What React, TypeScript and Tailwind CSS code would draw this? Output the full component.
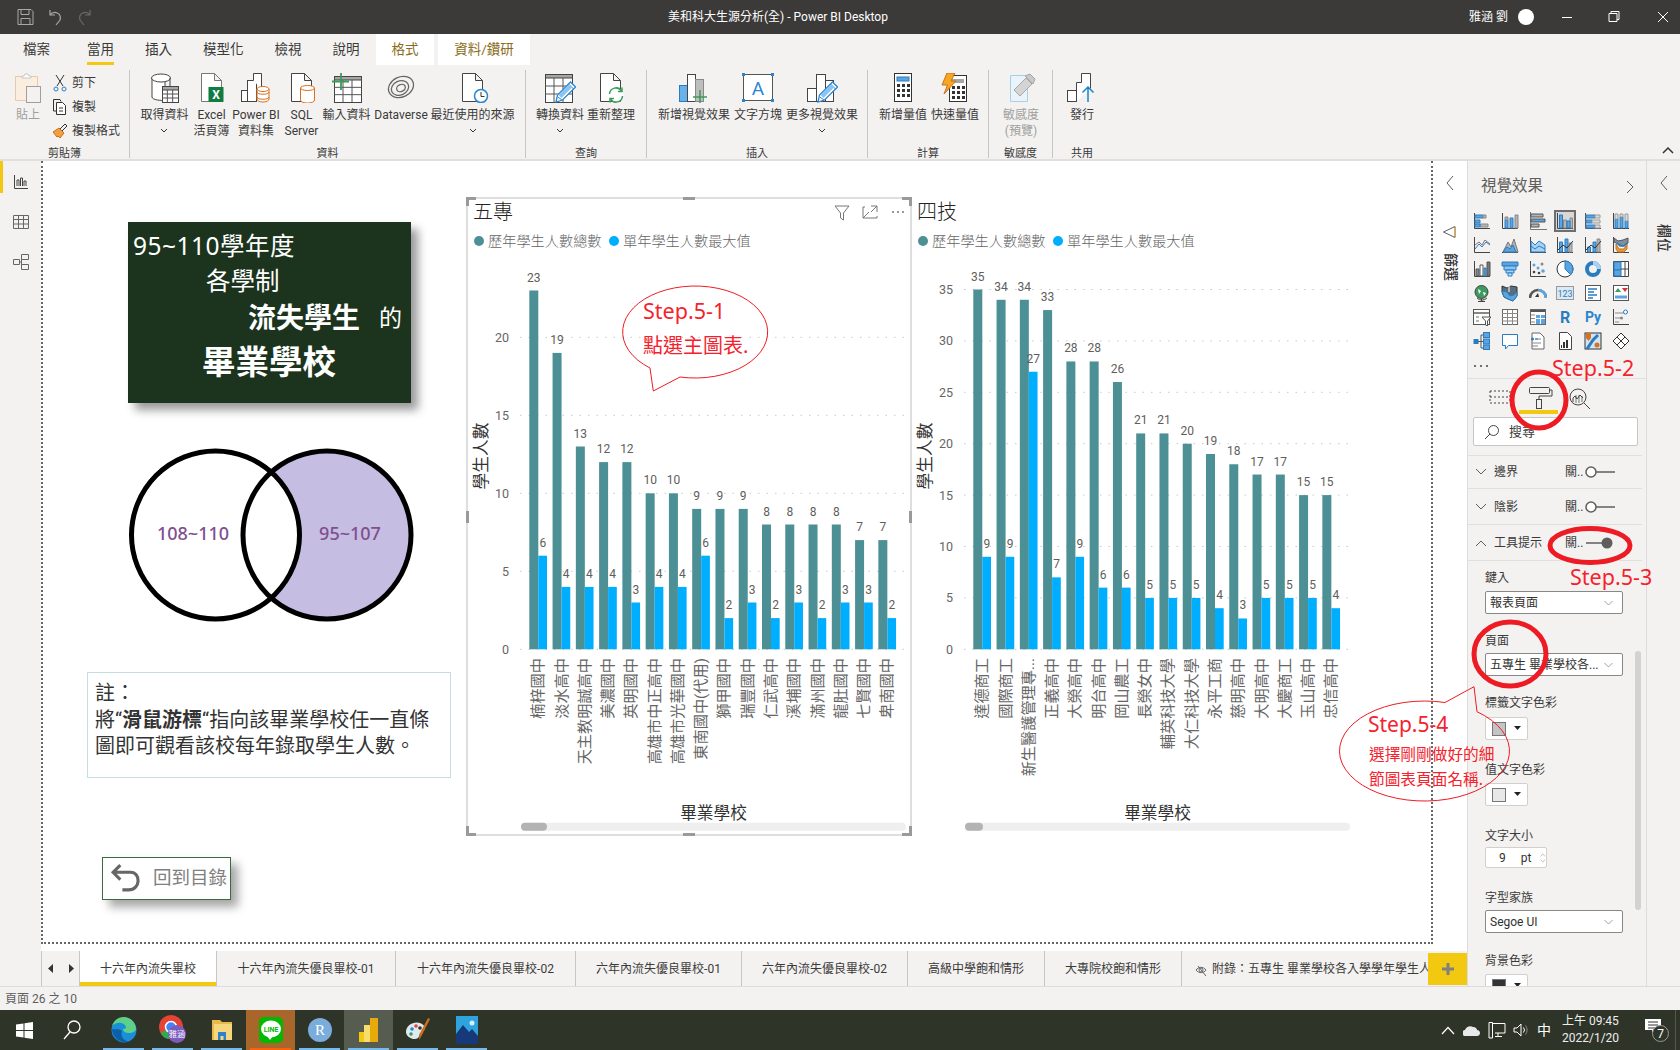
import { ReactNode } from "react";

const TEAL = "#4c9095";
const BLUE = "#00aeff";
const RED = "#ed1c24";
const DARK = "#444";
const PB = "#5ba4e0";
const PE = "#2a7cc0";
const GR = "#b5b5b5";

type Row = [string, number, number];

const wuzhuan: Row[] = [
  ["楠梓國中", 23, 6],
  ["淡水高中", 19, 4],
  ["天主教明誠高中", 13, 4],
  ["美濃國中", 12, 4],
  ["英明國中", 12, 3],
  ["高雄市中正高中", 10, 4],
  ["高雄市光華國中", 10, 4],
  ["東南國中(代用)", 9, 6],
  ["獅甲國中", 9, 2],
  ["瑞豐國中", 9, 3],
  ["仁武高中", 8, 2],
  ["溪埔國中", 8, 3],
  ["滿州國中", 8, 2],
  ["龍肚國中", 8, 3],
  ["七賢國中", 7, 3],
  ["卑南國中", 7, 2],
];

const siji: Row[] = [
  ["達德商工", 35, 9],
  ["國際商工", 34, 9],
  ["新生醫護管理專...", 34, 27],
  ["正義高中", 33, 7],
  ["大榮高中", 28, 9],
  ["明台高中", 28, 6],
  ["岡山農工", 26, 6],
  ["長榮女中", 21, 5],
  ["輔英科技大學", 21, 5],
  ["大仁科技大學", 20, 5],
  ["永平工商", 19, 4],
  ["慈明高中", 18, 3],
  ["大明高中", 17, 5],
  ["大慶商工", 17, 5],
  ["玉山高中", 15, 5],
  ["忠信高中", 15, 4],
];

function Handle({ x, y, w, h }: { x: number; y: number; w: number; h: number }) {
  return <rect x={x} y={y} width={w} height={h} fill="#9a9a9a" />;
}

function Chart({
  title,
  rows,
  unit,
  ticks,
  thumb,
  selected,
}: {
  title: string;
  rows: Row[];
  unit: number;
  ticks: number[];
  thumb: number;
  selected?: boolean;
}) {
  const base = 451.3;
  return (
    <svg width={444} height={637} viewBox="0 0 444 637" className="overflow-visible">
      {selected && (
        <g>
          <rect x={0} y={0} width={444} height={637} fill="none" stroke="#bdbdbd" strokeWidth={1} />
          <Handle x={-1} y={-1} w={10} h={3} />
          <Handle x={-1} y={-1} w={3} h={9} />
          <Handle x={435} y={-1} w={10} h={3} />
          <Handle x={442} y={-1} w={3} h={9} />
          <Handle x={-1} y={635} w={10} h={3} />
          <Handle x={-1} y={628} w={3} h={9} />
          <Handle x={435} y={635} w={10} h={3} />
          <Handle x={442} y={628} w={3} h={9} />
          <Handle x={216} y={-1} w={12} h={3} />
          <Handle x={216} y={635} w={12} h={3} />
          <Handle x={-1} y={313} w={3} h={12} />
          <Handle x={442} y={313} w={3} h={12} />
          <path d="M368 8h14l-5.500 7v7l-3-2v-5z" fill="none" stroke="#777" />
          <path d="M398 9h-2v11h14v-2M396 20l6-6M404 8h6v6M410 8l-6 6" fill="none" stroke="#777" />
          <circle cx={426} cy={14} r={1} fill="#777" />
          <circle cx={431} cy={14} r={1} fill="#777" />
          <circle cx={436} cy={14} r={1} fill="#777" />
        </g>
      )}
      <text x={6} y={14} fontSize={20} fontWeight={300} fill="#252423" dominantBaseline="central">
        {title}
      </text>
      <circle cx={12} cy={43} r={5} fill={TEAL} />
      <text x={21} y={43} fontSize={14.2} fontWeight={300} fill="#666" dominantBaseline="central">
        歷年學生人數總數
      </text>
      <circle cx={147} cy={43} r={5} fill={BLUE} />
      <text x={156} y={43} fontSize={14.2} fontWeight={300} fill="#666" dominantBaseline="central">
        單年學生人數最大值
      </text>
      {ticks.map((t) => (
        <g key={t}>
          <line
            x1={53}
            x2={439}
            y1={base - t * unit}
            y2={base - t * unit}
            stroke="#c8c8c8"
            strokeDasharray="1.500 7"
          />
          <text
            x={42}
            y={base - t * unit}
            fontSize={12.5}
            fill="#666"
            textAnchor="end"
            dominantBaseline="central"
          >
            {t}
          </text>
        </g>
      ))}
      {rows.map(([name, a, b], i) => {
        const x = 62.3 + i * 23.27;
        const cx = x + 9;
        return (
          <g key={name}>
            <rect x={x} y={base - a * unit} width={9} height={a * unit} fill={TEAL} />
            <rect x={x + 9} y={base - b * unit} width={8.700} height={b * unit} fill={BLUE} />
            <text
              x={x + 4.5}
              y={base - a * unit - 13}
              fontSize={12}
              fill="#605e5c"
              textAnchor="middle"
              dominantBaseline="central"
            >
              {a}
            </text>
            <text
              x={x + 13.5}
              y={base - b * unit - 13}
              fontSize={12}
              fill="#605e5c"
              textAnchor="middle"
              dominantBaseline="central"
            >
              {b}
            </text>
            <text
              x={cx}
              y={460}
              fontSize={15.2}
              fill="#666"
              textAnchor="end"
              dominantBaseline="central"
              transform={`rotate(-90 ${cx} 460)`}
            >
              {name}
            </text>
          </g>
        );
      })}
      <text
        x={14}
        y={258}
        fontSize={16.7}
        fill="#333"
        textAnchor="middle"
        dominantBaseline="central"
        transform="rotate(-90 14 258)"
      >
        學生人數
      </text>
      <text x={246.5} y={615} fontSize={16.7} fill="#333" textAnchor="middle" dominantBaseline="central">
        畢業學校
      </text>
      <rect x={54} y={624.7} width={385} height={8} rx={4} fill="#efefef" />
      <rect x={54} y={624.7} width={thumb} height={8} rx={4} fill="#b3b3b3" />
    </svg>
  );
}

function I32({ children, w = 32 }: { children: ReactNode; w?: number }) {
  return (
    <svg width={w} height={30} viewBox={`0 0 ${w} 30`} fill="none" stroke={DARK} strokeWidth={1}>
      {children}
    </svg>
  );
}

const Doc = (
  <path d="M5.500 .5h13l7 7v21h-20zM18.500 .5v7h7" fill="#fff" />
);

function Grid({ x, y, w, h }: { x: number; y: number; w: number; h: number }) {
  return (
    <g>
      <rect x={x + 0.5} y={y + 0.5} width={w} height={h} fill="#fff" />
      <rect x={x + 0.5} y={y + 0.5} width={w} height={3.500} fill="#a6a6a6" />
      <path
        d={`M${x + w / 3} ${y + 4}v${h - 4}M${x + (2 * w) / 3} ${y + 4}v${h - 4}M${x} ${y + 4 + (h - 4) / 3}h${w}M${x} ${y + 4 + (2 * (h - 4)) / 3}h${w}`}
        stroke="#555"
      />
    </g>
  );
}

function Cyl({ x, y, w, h }: { x: number; y: number; w: number; h: number }) {
  return (
    <g stroke="#d9701f" fill="#fff">
      <path d={`M${x} ${y + 3}v${h - 6}c0 4 ${w} 4 ${w} 0v-${h - 6}`} />
      <ellipse cx={x + w / 2} cy={y + 3} rx={w / 2} ry={2.500} />
    </g>
  );
}

const Pencil = (
  <g>
    <path d="M12 29l1.500-7 13-13 5 5-13 13z" fill="#fff" stroke="#2a86d0" strokeWidth={1.300} />
    <path d="M24.500 11l5 5" stroke="#2a86d0" />
    <path d="M14 24l4 3" stroke="#2a86d0" />
    <path d="M14.500 22l11-11 3 3-11 11z" fill="#8cc4f0" stroke="none" />
  </g>
);

const Bars = (
  <g fill="#fff">
    <rect x={1.500} y={15.500} width={9} height={13} />
    <rect x={10.500} y={1.500} width={9} height={27} />
    <rect x={19.500} y={7.500} width={8} height={21} />
  </g>
);

const Icons: Record<string, ReactNode> = {
  getData: (
    <I32>
      <path d="M3 5v19c0 3 10 4 13 3V5" fill="#fff" />
      <ellipse cx={12} cy={5} rx={9.500} ry={4} fill="#fff" />
      <path d="M21 5v8" />
      <Grid x={13} y={13} w={16} h={16} />
    </I32>
  ),
  excel: (
    <I32>
      <g stroke="#777">{Doc}</g>
      <rect x={12.500} y={14} width={15} height={15} fill="#107c41" stroke="none" />
      <text x={20} y={25.500} fontSize={12} fontWeight={700} fill="#fff" stroke="none" textAnchor="middle">
        X
      </text>
    </I32>
  ),
  dataset: (
    <I32>
      <g fill="#fff">
        <rect x={1.500} y={17.500} width={9} height={11} />
        <rect x={7.500} y={7.500} width={9} height={21} />
        <path d="M13.500 7.500v-7h8v16" />
      </g>
      <Cyl x={17} y={13} w={12} h={16} />
      <path d="M17 19c0 3 12 3 12 0M17 24c0 3 12 3 12 0" stroke="#d9701f" />
    </I32>
  ),
  sql: (
    <I32>
      {Doc}
      <Cyl x={14.500} y={12} w={14} h={18} />
    </I32>
  ),
  enter: (
    <I32>
      <Grid x={3} y={3} w={27} h={26} />
      <path d="M10 0v17M1 8.500h17" stroke="#3a9a5a" strokeWidth={1.800} />
    </I32>
  ),
  dataverse: (
    <I32>
      <g stroke="#666" strokeWidth={1.300}>
        <ellipse cx={16} cy={14} rx={13} ry={10} transform="rotate(-25 16 14)" />
        <ellipse cx={15} cy={15} rx={9} ry={7} transform="rotate(-25 15 15)" />
        <ellipse cx={16} cy={15} rx={4.500} ry={3.500} transform="rotate(-25 16 15)" />
      </g>
    </I32>
  ),
  recent: (
    <I32>
      {Doc}
      <circle cx={24} cy={23} r={6.500} fill="#fff" stroke="#2a86d0" strokeWidth={1.500} />
      <path d="M24 19v4.500h3.500" stroke="#333" />
    </I32>
  ),
  transform: (
    <I32>
      <Grid x={1} y={1} w={27} h={28} />
      {Pencil}
    </I32>
  ),
  refresh: (
    <I32>
      {Doc}
      <circle cx={21} cy={22} r={7.500} fill="#fff" stroke="none" />
      <path d="M14.500 21a6.500 6.500 0 0 1 12-3M27.500 23a6.500 6.500 0 0 1-12 3" stroke="#3a9a5a" strokeWidth={1.500} />
      <path d="M27 14.500v4h-4M15 29.500v-4h4" stroke="#3a9a5a" strokeWidth={1.500} />
    </I32>
  ),
  visual: (
    <I32>
      <rect x={1.500} y={12.500} width={8} height={16} fill="#69b1ea" stroke="#2a7cc0" />
      <rect x={9.500} y={1.500} width={8} height={27} fill="#fff" />
      <rect x={17.500} y={6.500} width={8} height={22} fill="#bdbdbd" stroke="#888" />
      <path d="M22 17v13M15 24h14" stroke="#3a9a5a" strokeWidth={1.500} />
    </I32>
  ),
  textbox: (
    <I32 w={34}>
      <rect x={2.500} y={1.500} width={29} height={26} fill="#fff" stroke="#555" />
      <g fill="#2a86d0" stroke="none">
        <rect x={1} y={0} width={3} height={3} />
        <rect x={30} y={0} width={3} height={3} />
        <rect x={1} y={26} width={3} height={3} />
        <rect x={30} y={26} width={3} height={3} />
      </g>
      <text x={17} y={22} fontSize={19} fill="#2a86d0" stroke="none" textAnchor="middle">
        A
      </text>
    </I32>
  ),
  more: (
    <I32>
      {Bars}
      {Pencil}
    </I32>
  ),
  measure: (
    <I32 w={20}>
      <rect x={1.500} y={.5} width={17} height={28} fill="#fff" stroke="#333" />
      <rect x={4} y={4} width={12} height={4} fill="#5ba4e0" stroke="#2a7cc0" />
      <g fill="#333" stroke="none">
        {[11, 16, 21].map((y) =>
          [4, 9, 14].map((x) => <rect key={`${x}-${y}`} x={x} y={y} width={3} height={3} />)
        )}
      </g>
    </I32>
  ),
  quick: (
    <I32>
      <rect x={10.500} y={2.500} width={17} height={26} fill="#fff" stroke="#333" />
      <rect x={13} y={6} width={12} height={4} fill="#a6a6a6" stroke="none" />
      <g fill="#333" stroke="none">
        {[13, 18, 23].map((y) =>
          [13, 18, 23].map((x) => <rect key={`${x}-${y}`} x={x} y={y} width={3} height={3} />)
        )}
      </g>
      <path d="M8 0h8l-4 8h5L5 21l3.500-9H3z" fill="#f6a623" stroke="#c9701a" />
    </I32>
  ),
  sensitivity: (
    <I32>
      <g stroke="#a6cfe8">
        <path d="M5.500 2.500h17v26h-17z" fill="#eaf3f9" />
      </g>
      <path d="M9 17l12-12 6 6-12 12z" fill="#d4d4d4" stroke="#a8a8a8" />
      <path d="M20 3l5-2 5 5-2 5z" fill="#c8c8c8" stroke="#a8a8a8" />
    </I32>
  ),
  publish: (
    <I32>
      <g fill="#fff">
        <rect x={1.500} y={17.500} width={9} height={11} />
        <path d="M10.500 28.500v-19h5v-9h9v15" />
      </g>
      <path d="M22 29V14M16.500 19.500L22 14l5.500 5.500" stroke="#1a86c8" strokeWidth={1.500} />
    </I32>
  ),
};

function RibbonBtn({
  w,
  icon,
  lines,
  chevron,
  muted,
}: {
  w: string;
  icon: string;
  lines: string[];
  chevron?: boolean;
  muted?: boolean;
}) {
  return (
    <div className={`flex shrink-0 flex-col items-center pt-[3px] ${w}`}>
      <div className="flex h-[30px] items-center justify-center">{Icons[icon]}</div>
      <div
        className={`mt-[4px] whitespace-nowrap text-center text-[12px] leading-[16px] ${muted ? "text-[#a19f9d]" : "text-[#3b3a39]"}`}
      >
        {lines.map((l) => (
          <div key={l}>{l}</div>
        ))}
        {chevron && (
          <svg width={8} height={16} viewBox="0 0 8 16" fill="none" stroke="#333" className="mx-auto">
            <path d="M1 6l3 3 3-3" />
          </svg>
        )}
      </div>
    </div>
  );
}

function Group({ w, pl, label, children }: { w: string; pl: string; label: string; children: ReactNode }) {
  return (
    <div className={`mt-[5px] h-[88px] shrink-0 border-r border-[#c8c6c4] ${w}`}>
      <div className={`flex h-[77px] ${pl}`}>{children}</div>
      <div className="text-center text-[11px] leading-[13px] text-[#3b3a39]">{label}</div>
    </div>
  );
}

function V({ children }: { children: ReactNode }) {
  return (
    <svg width={18} height={18} viewBox="0 0 18 18" fill="none" stroke={DARK} strokeWidth={1}>
      {children}
    </svg>
  );
}

const Ax = <path d="M1.500 1v15.500H17" />;

const visuals: ReactNode[] = [
  <V>
    {Ax}
    <path d="M2 3h8v3H2z" fill={PB} stroke={PE} />
    <path d="M10 3h3v3h-3zM7 12h8v3H7z" fill={GR} stroke="#888" />
    <path d="M2 8h5v3H2zM2 12h5v3H2z" fill={PB} stroke={PE} />
  </V>,
  <V>
    {Ax}
    <path d="M4 8h3v8H4zM9 6h3v10H9z" fill={PB} stroke={PE} />
    <path d="M14 3h3v13h-3zM4 5h3v3H4z" fill={GR} stroke="#888" />
  </V>,
  <V>
    <path d="M1.500 0v17.500H18" stroke="#777" />
    <path d="M2 2h12v3H2z" fill={GR} stroke="#555" />
    <path d="M2 7h14v3H2z" fill={PB} stroke="#555" />
    <path d="M2 12h8v3H2z" fill={GR} stroke="#555" />
  </V>,
  <V>
    {Ax}
    <path d="M3.500 3h3v13h-3z" fill={PB} stroke={PE} />
    <path d="M7.500 8h3v8h-3zM14 6h2.500v10H14z" fill={GR} stroke="#888" />
    <path d="M11 9h3v7h-3z" fill={PB} stroke={PE} />
  </V>,
  <V>
    <path d="M1.500 1v15.500H17" stroke="#555" />
    <path d="M2 3h9v3H2zM2 8h6v3H2zM2 13h9v3H2z" fill={PB} stroke={PE} />
    <path d="M11 3h5v3h-5zM8 8h8v3H8zM11 13h5v3h-5z" fill="#ddd" stroke="#999" />
  </V>,
  <V>
    {Ax}
    <path d="M3 7h3v9H3zM8 5h3v11H8zM13 9h3v7h-3z" fill={PB} stroke={PE} />
    <path d="M3 2h3v5H3zM8 2h3v3H8zM13 2h3v7h-3z" fill="#ddd" stroke="#999" />
  </V>,
  <V>
    {Ax}
    <path d="M2 13l4-5 3 3 4-5 4 3" stroke={PE} />
    <path d="M2 9l4-3 3 3 3-5 5 4" stroke="#777" />
  </V>,
  <V>
    <path d="M1 16.500h16" />
    <path d="M2 16l5-10 3 5 3-8 4 13z" fill={GR} stroke="#777" />
    <path d="M2 16l4-5 3 2 3-4 3 7z" fill={PB} stroke={PE} />
  </V>,
  <V>
    {Ax}
    <path d="M2 5l4 4 4-4 6 4v7H2z" fill="#a9d1f1" stroke={PE} />
    <path d="M2 10l4 3 4-3 6 3" stroke={PE} />
  </V>,
  <V>
    {Ax}
    <path d="M3.500 6h3v10h-3zM9 3h3v13H9z" fill={PB} stroke={PE} />
    <path d="M13 7h3v9h-3z" fill={GR} stroke="#888" />
    <path d="M2 14l5-5 4 3 6-7" stroke="#333" />
  </V>,
  <V>
    {Ax}
    <path d="M3.500 11h3v5h-3zM9 6h3v10H9z" fill={PB} stroke={PE} />
    <path d="M13 3h3v13h-3z" fill={GR} stroke="#888" />
    <path d="M2 14l5-5 4 3 6-7" stroke="#333" />
  </V>,
  <V>
    {Ax}
    <path d="M2 2l4 3 5-1 5-2v5l-5 3-5-2-4-2z" fill="#7e8f9e" stroke="#556" />
    <path d="M4 8l3 5h5l3-5v5l-3 3H6l-2-3z" fill="#e89a3c" stroke="#c9701a" />
    <path d="M5 7l3 3 4 0 3-3" stroke={PE} strokeWidth={1.500} />
  </V>,
  <V>
    {Ax}
    <path d="M3 9h3v7H3z" fill="#888" stroke="#555" />
    <path d="M7 5h3v11H7z" fill="#fff" stroke="#555" />
    <path d="M11 8h2v8h-2z" fill={PB} stroke={PE} />
    <path d="M14 2h3v14h-3z" fill="#777" stroke="#555" />
  </V>,
  <V>
    <path d="M1 2h16v4H1z" fill={PB} stroke={PE} />
    <path d="M3 6h12v4H3z" fill="#8cc4f0" stroke={PE} />
    <path d="M5 10h8v3H5z" fill="#a9d1f1" stroke={PE} />
    <path d="M7 13h4v3H7z" fill="#c6e0f5" stroke={PE} />
  </V>,
  <V>
    {Ax}
    <g stroke="none">
      <circle cx={5} cy={5} r={1.500} fill={PB} />
      <circle cx={9} cy={8} r={1.500} fill={PB} />
      <circle cx={13} cy={4} r={1.500} fill="#888" />
      <circle cx={14} cy={11} r={1.800} fill={PB} />
      <circle cx={5} cy={12} r={1.300} fill="#444" />
      <circle cx={10} cy={13} r={1.300} fill="#444" />
    </g>
  </V>,
  <V>
    <circle cx={9} cy={9} r={8} fill="#fff" stroke="#333" />
    <path d="M9 1a8 8 0 0 1 8 8 8 8 0 0 1-2.300 5.700L9 9z" fill={PB} stroke={PE} />
  </V>,
  <V>
    <circle cx={9} cy={9} r={6} stroke={PE} strokeWidth={4} />
    <path d="M9 3a6 6 0 0 1 6 6" stroke="#a9d1f1" strokeWidth={4} />
  </V>,
  <V>
    <path d="M1.500 1.500h15v15h-15z" fill="#fff" />
    <path d="M2 2h7v8H2z" fill={PB} stroke={PE} />
    <path d="M2 10h7v6H2z" fill={PB} stroke={PE} />
    <path d="M13 2v14M9 9h8" />
  </V>,
  <V>
    <circle cx={8.500} cy={8} r={6.500} fill="#3c9a5f" stroke="#444" />
    <path d="M5 5l3 2-2 3zM10 8l3 1-2 3z" fill="#fff" stroke="none" />
    <path d="M14 14a7 7 0 0 1-10 0M8.500 15v3M5 17.500h7" />
  </V>,
  <V>
    <path d="M1 2l5 2 4-2 6 1v9l-4 5-5-2-4-2-2-5z" fill="#5a6d7e" stroke="#333" />
    <path d="M1 7l5 1 3 4 4-1 3-3v4l-4 5-5-2-4-2z" fill={PB} stroke={PE} />
    <path d="M8 2v6" stroke="#fff" />
  </V>,
  <V>
    <path d="M1 14a8 8 0 0 1 16 0" stroke="#555" strokeWidth={2.500} />
    <path d="M9 6a8 8 0 0 1 8 8" stroke={PB} strokeWidth={2.500} />
    <path d="M6 13l3-4 1 4" fill="#333" stroke="none" />
  </V>,
  <V>
    <rect x={.5} y={2.500} width={17} height={13} fill="#dce8f3" stroke="#999" />
    <text x={9} y={13} fontSize={9} fill={PE} stroke="none" textAnchor="middle">
      123
    </text>
  </V>,
  <V>
    <rect x={1.500} y={1.500} width={15} height={15} fill="#fff" stroke="#555" />
    <path d="M4 5h9M4 8h6M4 11h9M4 14h5" stroke={PE} strokeWidth={1.400} />
  </V>,
  <V>
    <rect x={1.500} y={1.500} width={15} height={15} fill="#fff" stroke="#555" />
    <path d="M3 8l3-4 3 4z" fill="#3c9a5f" stroke="none" />
    <path d="M10 4h6l-3 4z" fill="#d13438" stroke="none" />
    <path d="M3 13h12" stroke="#5ba4e0" strokeWidth={3} />
  </V>,
  <V>
    <rect x={.5} y={1.500} width={16} height={15} fill="#fff" stroke="#555" />
    <path d="M1 5h15" stroke="#888" strokeWidth={2} />
    <path d="M3 8h3v2H3zM3 12h3v2H3z" fill={GR} stroke="none" />
    <path d="M9 9h9l-3.500 4v5l-2-1v-4z" fill="#fff" stroke="#555" />
  </V>,
  <V>
    <rect x={1.500} y={1.500} width={15} height={15} fill="#fff" stroke="#666" />
    <path d="M1 5.500h16M1 9.500h16M1 13h16M6.500 2v15M11.500 2v15" stroke="#888" />
  </V>,
  <V>
    <rect x={1.500} y={1.500} width={15} height={15} fill="#fff" stroke="#666" />
    <path d="M7 7h4v3H7zM12 7h4v3h-4zM12 11h4v5h-4zM7 11h4v5H7z" fill={PB} stroke="none" />
    <path d="M2 3h14" stroke="#555" strokeWidth={2} />
    <path d="M2 7h4M2 10.500h4M2 14h4" stroke="#888" />
  </V>,
  <V>
    <text x={9} y={15} fontSize={16} fontWeight={700} fill="#2a7cc0" stroke="none" textAnchor="middle">
      R
    </text>
  </V>,
  <V>
    <text x={9} y={14} fontSize={14} fontWeight={700} fill="#2a86d0" stroke="none" textAnchor="middle">
      Py
    </text>
  </V>,
  <V>
    {Ax}
    <path d="M3 5h9M3 10h6M3 14h4" stroke="#888" />
    <circle cx={13.500} cy={4} r={2} fill="#fff" stroke={PE} />
    <circle cx={9.500} cy={10} r={1.500} fill="#888" stroke="none" />
  </V>,
  <V>
    <rect x={.5} y={7} width={5} height={5} fill={PE} stroke="none" />
    <path d="M5 9.500h3M8 3v13M8 3h3M8 9.500h3M8 16h3" stroke="#555" />
    <rect x={10.500} y={.5} width={6} height={5} fill={PB} stroke={PE} />
    <rect x={10.500} y={7} width={6} height={5} fill={PB} stroke={PE} />
    <rect x={10.500} y={13} width={6} height={4.500} fill={PB} stroke={PE} />
  </V>,
  <V>
    <path d="M1.500 2.500h15v11h-9l-3 3.500v-3.500h-3z" fill="#fff" stroke={PE} />
  </V>,
  <V>
    <path d="M3 1h8l4 4v12H3z" fill="#fff" stroke="#666" />
    <circle cx={3.500} cy={7} r={1.500} fill={PE} stroke="none" />
    <path d="M6 7h6M3 11h9M3 14h6" stroke="#888" />
    <path d="M6 7h3" stroke={PE} />
  </V>,
  <V>
    <path d="M3.500 .5h8l4 4v13h-12z" fill="#fff" stroke="#444" />
    <path d="M7 10h2v6H7zM10 8h2v8h-2zM5 13h1v3H5z" fill="#333" stroke="none" />
  </V>,
  <V>
    <rect x={1} y={1} width={16} height={16} fill="#cfe5f7" stroke="#333" />
    <path d="M3 17l6-9 5-5" stroke={PE} strokeWidth={3} />
    <path d="M2 1h5v5l-2.500 3L2 6z" fill="#d9701f" stroke="none" />
    <circle cx={13} cy={13} r={2.500} fill="#d9701f" stroke="none" />
  </V>,
  <V>
    <path d="M9 1l8 8-8 8-8-8z" fill="#fff" stroke="#333" />
    <path d="M5 5l8 8M13 5l-8 8" stroke="#333" />
  </V>,
];

function Chevron({ up }: { up?: boolean }) {
  return (
    <svg width={12} height={8} viewBox="0 0 12 8" fill="none" stroke="#605e5c" className="shrink-0">
      <path d={up ? "M1 7l5-5 5 5" : "M1 1l5 5 5-5"} />
    </svg>
  );
}

function SectionRow({ label, on, h }: { label: string; on?: boolean; h: string }) {
  return (
    <div className={`flex items-center border-b border-[#e1dfdd] pl-[7px] ${h}`}>
      <Chevron up={on} />
      <span className="ml-[7px] w-[71px] text-[12px] text-[#3b3a39]">{label}</span>
      <span className="w-[16px] text-[12px] text-[#3b3a39]">關..</span>
      <svg width={30} height={12} viewBox="0 0 30 12" className="ml-[4px]">
        {on ? (
          <g>
            <path d="M1 6h20" stroke="#605e5c" strokeWidth={1.500} />
            <circle cx={22} cy={6} r={5.500} fill="#605e5c" />
          </g>
        ) : (
          <g>
            <path d="M11 6h19" stroke="#605e5c" strokeWidth={1.500} />
            <circle cx={6} cy={6} r={5} fill="#fff" stroke="#605e5c" strokeWidth={1.500} />
          </g>
        )}
      </svg>
    </div>
  );
}

function Select({ value, mt }: { value: string; mt: string }) {
  return (
    <div
      className={`flex h-[23px] w-[138px] items-center justify-between rounded-[2px] border border-[#8a8886] bg-white pl-[4px] pr-[9px] text-[12px] text-[#323130] ${mt}`}
    >
      <span className="whitespace-nowrap">{value}</span>
      <svg width={9} height={6} viewBox="0 0 9 6" fill="none" stroke="#a19f9d">
        <path d="M.5 1l4 4 4-4" />
      </svg>
    </div>
  );
}

function Swatch({ color, mt }: { color: string; mt: string }) {
  return (
    <div
      className={`flex h-[23px] w-[43px] shrink-0 items-center rounded-[2px] border border-[#d2d0ce] bg-white pl-[6px] ${mt}`}
    >
      <div className="h-[14px] w-[14px] border border-[#777]" style={{ background: color }} />
      <svg width={8} height={5} viewBox="0 0 8 5" className="ml-[8px]">
        <path d="M0 0h7L3.500 4z" fill="#222" />
      </svg>
    </div>
  );
}

function Label({ text, mt }: { text: string; mt: string }) {
  return <div className={`h-[16px] text-[12px] leading-[16px] text-[#3b3a39] ${mt}`}>{text}</div>;
}

function VisualsPanel() {
  return (
    <div className="relative w-[180px] shrink-0 overflow-hidden border-l border-r border-[#dcdcdc] bg-[#f3f2f1]">
      <div className="flex h-[48px] items-center justify-between pl-[13px] pr-[12px] pt-[4px]">
        <span className="text-[15.5px] text-[#605e5c]">視覺效果</span>
        <svg width={8} height={14} viewBox="0 0 8 14" fill="none" stroke="#605e5c">
          <path d="M1 1l6 6-6 6" />
        </svg>
      </div>
      <div className="grid w-[167px] grid-cols-6">
        {visuals.map((v, i) => (
          <div key={i} className="flex h-[24px] items-center justify-center">
            <div
              className={
                i === 3
                  ? "flex h-[22px] w-[22px] items-center justify-center border-2 border-[#6e6e6e] bg-[#d8d8d8]"
                  : "flex items-center justify-center"
              }
            >
              {v}
            </div>
          </div>
        ))}
      </div>
      <div className="flex h-[25px] items-center pl-[5px]">
        <svg width={16} height={4} viewBox="0 0 16 4" fill="#444">
          <circle cx={2} cy={2} r={1} />
          <circle cx={8} cy={2} r={1} />
          <circle cx={14} cy={2} r={1} />
        </svg>
      </div>
      <div className="relative h-[37px] border-t border-[#e1dfdd]">
        <svg width={178} height={36} viewBox="0 0 178 36" fill="none" stroke="#444">
          <path d="M22 12h20M22 18h20M22 24h20M22 12v12M42 12v12" strokeDasharray="2 2" />
          <rect x={61.500} y={8.500} width={20} height={6} rx={1} />
          <path d="M81 11h3v6H71v4" />
          <rect x={68.500} y={20.500} width={5} height={9} />
          <circle cx={110} cy={18} r={8} />
          <path d="M105 23v-4l2-2 2 3 3-4 3 3M116 24l6 6" />
          <path d="M108 16v8M111 16v8M114 17v6" strokeWidth={.7} />
        </svg>
        <div className="absolute bottom-[1px] left-[51px] h-[4px] w-[39px] bg-[#f2c811]" />
      </div>
      <div className="mx-[5px] mt-[2px] flex h-[29px] w-[165px] items-center rounded-[2px] border border-[#c8c6c4] bg-white pl-[10px]">
        <svg width={16} height={16} viewBox="0 0 16 16" fill="none" stroke="#444">
          <circle cx={9.500} cy={6.500} r={5} />
          <path d="M6 10l-5 5" />
        </svg>
        <span className="ml-[9px] text-[13px] text-[#3b3a39]">搜尋</span>
      </div>
      <div className="mt-[9px] w-[174px] border-t border-[#e1dfdd]">
        <SectionRow label="邊界" h="h-[33px]" />
        <SectionRow label="陰影" h="h-[36px]" />
        <SectionRow label="工具提示" on h="h-[36px]" />
      </div>
      <div className="flex flex-col pl-[17px] pt-[9px]">
        <Label text="鍵入" mt="" />
        <Select value="報表頁面" mt="mt-[5px]" />
        <Label text="頁面" mt="mt-[19px]" />
        <Select value="五專生 畢業學校各..." mt="mt-[4px]" />
        <Label text="標籤文字色彩" mt="mt-[19px]" />
        <Swatch color="#c4c4c4" mt="mt-[6px]" />
        <Label text="值文字色彩" mt="mt-[22px]" />
        <Swatch color="#e8e8e8" mt="mt-[5px]" />
        <Label text="文字大小" mt="mt-[22px]" />
        <div className="mt-[3px] flex h-[21px] w-[62px] items-center rounded-[2px] border border-[#d2d0ce] bg-white pl-[13px] text-[12px] text-[#323130]">
          <span>9</span>
          <span className="ml-[15px]">pt</span>
          <svg width={10} height={16} viewBox="0 0 10 16" fill="none" stroke="#888" className="ml-[9px]">
            <path d="M1 5l4-4 4 4M1 11l4 4 4-4" />
          </svg>
        </div>
        <Label text="字型家族" mt="mt-[22px]" />
        <Select value="Segoe UI" mt="mt-[4px]" />
        <Label text="背景色彩" mt="mt-[20px]" />
        <Swatch color="#333333" mt="mt-[5px]" />
      </div>
      <div className="absolute left-[167px] top-[490px] h-[259px] w-[6px] rounded-[3px] bg-[#d2d2d2]" />
    </div>
  );
}

function PageTab({ label, w, active }: { label: string; w: string; active?: boolean }) {
  return (
    <div
      className={`relative flex h-full shrink-0 items-center justify-center border-r border-[#c8c6c4] text-[12px] text-[#3b3a39] ${w} ${active ? "bg-white" : "bg-[#f3f2f1]"}`}
    >
      {label}
      {active && <div className="absolute bottom-0 left-0 h-[4px] w-full bg-[#f2c811]" />}
    </div>
  );
}

function TaskIcon({ children, bar, bg }: { children: ReactNode; bar: string; bg?: string }) {
  return (
    <div className={`relative flex h-full w-[49px] shrink-0 items-center justify-center ${bg ?? ""}`}>
      {children}
      <div className={`absolute bottom-0 left-[4px] right-[4px] h-[2px] ${bar}`} />
    </div>
  );
}

export default function App() {
  return (
    <div className="relative flex h-[1050px] w-[1680px] flex-col overflow-hidden bg-white font-['Roboto','Noto_Sans_CJK_TC',sans-serif]">
      {/* title bar */}
      <div className="flex h-[34px] shrink-0 items-center bg-[#3b3a39]">
        <div className="flex w-[668px] shrink-0 items-center">
          <svg width={90} height={20} viewBox="0 0 90 20" fill="none" className="ml-[17px]">
            <path d="M1 2.500h13l2 2v13H1z M4 2.500v5h8v-5M4 17.500v-6h9v6" stroke="#a8a8a8" />
            <path d="M33 3v5h5M33 8c4-5 12-2 10 5l-4 5" stroke="#a8a8a8" strokeWidth={1.200} />
            <path d="M73 3v5h-5M73 8c-4-5-12-2-10 5l4 5" stroke="#6a6a6a" strokeWidth={1.200} />
          </svg>
        </div>
        <span className="whitespace-nowrap text-[12px] text-white">美和科大生源分析(全) - Power BI Desktop</span>
        <span className="ml-auto whitespace-nowrap text-[12px] text-white">雅涵 劉</span>
        <div className="ml-[10px] h-[16px] w-[16px] shrink-0 rounded-full bg-white" />
        <svg width={134} height={14} viewBox="0 0 134 14" fill="none" stroke="#fff" className="ml-[12px] shrink-0">
          <path d="M16 7.500h10" />
          <path d="M63 3.500h8v8h-8zM65 3.500v-2h8v8h-2" />
          <path d="M112 2l10 10M122 2l-10 10" />
        </svg>
      </div>

      {/* ribbon tabs */}
      <div className="flex h-[31px] shrink-0 items-stretch bg-[#f3f2f1] text-[13.5px] text-[#3b3a39]">
        <div className="flex w-[376px] items-center pl-[23px]">
          <span>檔案</span>
          <span className="relative ml-[37px] flex h-full items-center">
            當用
            <span className="absolute bottom-0 left-0 h-[3px] w-full bg-[#f2c811]" />
          </span>
          <span className="ml-[31px]">插入</span>
          <span className="ml-[31px]">模型化</span>
          <span className="ml-[31px]">檢視</span>
          <span className="ml-[31px]">說明</span>
        </div>
        <div className="flex w-[58px] items-center justify-center bg-white text-[#8a6d1a]">格式</div>
        <div className="ml-[4px] flex w-[92px] items-center justify-center bg-white text-[#8a6d1a]">資料/鑽研</div>
      </div>

      {/* ribbon */}
      <div className="relative flex h-[96px] shrink-0 border-b-2 border-[#e1dfdd] bg-[#f3f2f1]">
        <Group w="w-[130px]" pl="pl-[3px]" label="剪貼簿">
          <div className="flex w-[50px] flex-col items-center pt-[3px]">
            <svg width={30} height={30} viewBox="0 0 30 30" fill="none">
              <path d="M2.500 3.500h22v24h-22z" fill="#fbeee0" stroke="#e8c9a8" />
              <path d="M9 5V3h2l1-2h3l1 2h2v2z" fill="#fff" stroke="#c8c6c4" />
              <rect x={13.500} y={13.500} width={14} height={16} fill="#f3f2f1" stroke="#a19f9d" />
            </svg>
            <span className="mt-[4px] text-[12px] leading-[16px] text-[#a19f9d]">貼上</span>
          </div>
          <div className="flex flex-col pt-[1px]">
            <div className="flex h-[24px] items-center gap-[5px] text-[12px] text-[#3b3a39]">
              <svg width={14} height={18} viewBox="0 0 14 18" fill="none" stroke="#333">
                <path d="M3 1l7 11M11 1L4 12" />
                <circle cx={3} cy={15} r={2} stroke="#2a7cc0" />
                <circle cx={11} cy={15} r={2} stroke="#2a7cc0" />
              </svg>
              剪下
            </div>
            <div className="flex h-[24px] items-center gap-[5px] text-[12px] text-[#3b3a39]">
              <svg width={14} height={16} viewBox="0 0 14 16" fill="none" stroke="#333">
                <path d="M4 12H.5V.5H7l1 2" />
                <path d="M3.500 3.500h6l3 3v9h-9zM6 9h4M6 12h4" fill="#fff" />
              </svg>
              複製
            </div>
            <div className="flex h-[24px] items-center gap-[5px] text-[12px] text-[#3b3a39]">
              <svg width={14} height={16} viewBox="0 0 14 16" fill="none">
                <path d="M0 9l6-4 5 5-4 5-2-2-1 1z" fill="#f0a040" stroke="#c9701a" />
                <path d="M7 6l5-5 2 2-5 5" stroke="#333" />
              </svg>
              複製格式
            </div>
          </div>
        </Group>
        <Group w="w-[396px]" pl="pl-[9px]" label="資料">
          <RibbonBtn w="w-[51px]" icon="getData" lines={["取得資料"]} chevron />
          <RibbonBtn w="w-[43px]" icon="excel" lines={["Excel", "活頁簿"]} />
          <RibbonBtn w="w-[46px]" icon="dataset" lines={["Power BI", "資料集"]} />
          <RibbonBtn w="w-[45px]" icon="sql" lines={["SQL", "Server"]} />
          <RibbonBtn w="w-[45px]" icon="enter" lines={["輸入資料"]} />
          <RibbonBtn w="w-[64px]" icon="dataverse" lines={["Dataverse"]} />
          <RibbonBtn w="w-[79px]" icon="recent" lines={["最近使用的來源"]} chevron />
        </Group>
        <Group w="w-[121px]" pl="pl-[8px]" label="查詢">
          <RibbonBtn w="w-[52px]" icon="transform" lines={["轉換資料"]} chevron />
          <RibbonBtn w="w-[50px]" icon="refresh" lines={["重新整理"]} />
        </Group>
        <Group w="w-[221px]" pl="pl-[9px]" label="插入">
          <RibbonBtn w="w-[76px]" icon="visual" lines={["新增視覺效果"]} />
          <RibbonBtn w="w-[52px]" icon="textbox" lines={["文字方塊"]} />
          <RibbonBtn w="w-[76px]" icon="more" lines={["更多視覺效果"]} chevron />
        </Group>
        <Group w="w-[121px]" pl="pl-[9px]" label="計算">
          <RibbonBtn w="w-[52px]" icon="measure" lines={["新增量值"]} />
          <RibbonBtn w="w-[52px]" icon="quick" lines={["快速量值"]} />
        </Group>
        <Group w="w-[64px]" pl="pl-[8px]" label="敏感度">
          <RibbonBtn w="w-[48px]" icon="sensitivity" lines={["敏感度", "(預覽)"]} muted />
        </Group>
        <div className="mt-[5px] h-[88px] w-[60px] shrink-0">
          <div className="flex h-[77px] pl-[9px]">
            <RibbonBtn w="w-[40px]" icon="publish" lines={["發行"]} />
          </div>
          <div className="pr-[2px] text-center text-[11px] leading-[13px] text-[#3b3a39]">共用</div>
        </div>
        <svg width={12} height={8} viewBox="0 0 12 8" fill="none" stroke="#333" strokeWidth={1.500} className="absolute bottom-[5px] right-[6px]">
          <path d="M1 7l5-5 5 5" />
        </svg>
      </div>

      {/* main */}
      <div className="flex min-h-0 flex-1">
        {/* page nav */}
        <div className="relative flex w-[41px] shrink-0 flex-col items-center bg-[#f3f2f1] pl-[1px] pt-[14px]">
          <div className="absolute left-0 top-0 h-[32px] w-[3px] bg-[#f2c811]" />
          <svg width={14} height={14} viewBox="0 0 14 14" fill="none" stroke="#444">
            <path d="M.5 0v13.500H14M3 11V5h2v6M6.500 11V3h2v8M10 11V6h2v5" />
          </svg>
          <svg width={16} height={14} viewBox="0 0 16 14" fill="none" stroke="#666" className="mt-[26px]">
            <path d="M.5.5h15v13H.5zM.5 4.500h15M.5 9h15M5.500 .5v13M10.500 .5v13" />
          </svg>
          <svg width={18} height={18} viewBox="0 0 18 18" fill="none" stroke="#666" className="mt-[24px]">
            <path d="M9.500 1.500h7v5h-7zM1.500 6.500h6v5h-6zM9.500 11.500h7v5h-7zM7.500 9h2M9.500 4v10" />
          </svg>
        </div>

        <div className="flex w-[1426px] shrink-0 flex-col">
          <div className="flex h-[790px] shrink-0">
            {/* report canvas */}
            <div className="relative w-[1392px] shrink-0 bg-white">
              <div className="h-[783px] border-x-2 border-b-2 border-dotted border-[#666]" />

              <div className="absolute left-[87px] top-[61px] h-[181px] w-[283px] bg-[#1c341e] pt-[7px] font-['Noto_Sans','Noto_Sans_CJK_TC',sans-serif] text-white shadow-[7px_7px_9px_rgba(0,0,0,0.4)]">
                <div className="h-[34px] pl-[5px] text-[24.5px] leading-[34px] tracking-[.5px]">95~110學年度</div>
                <div className="h-[36px] pl-[78px] text-[24.5px] leading-[36px]">各學制</div>
                <div className="flex h-[36px] items-center pl-[120px]">
                  <span className="text-[28px] font-bold">流失學生</span>
                  <span className="ml-[19px] text-[23px]">的</span>
                </div>
                <div className="h-[52px] pl-[74px] text-[33.5px] font-bold leading-[52px]">畢業學校</div>
              </div>

              <svg width={290} height={180} viewBox="0 0 290 180" className="absolute left-[85px] top-[284px] font-['Noto_Sans',sans-serif]">
                <circle cx={201} cy={90} r={84} fill="#c6bde3" />
                <circle cx={89.500} cy={90} r={84} fill="#fff" />
                <circle cx={201} cy={90} r={84} fill="none" stroke="#000" strokeWidth={5} />
                <circle cx={89.500} cy={90} r={84} fill="none" stroke="#000" strokeWidth={5} />
                <text x={67} y={88} fontSize={18} fontWeight={500} fill="#7f4f8f" textAnchor="middle" dominantBaseline="central">
                  108~110
                </text>
                <text x={224} y={88} fontSize={18} fontWeight={500} fill="#7f4f8f" textAnchor="middle" dominantBaseline="central">
                  95~107
                </text>
              </svg>

              <div className="absolute left-[46px] top-[511px] h-[106px] w-[364px] border border-[#c5dde0] pl-[7px] pt-[7px] text-[20px] leading-[26.5px] text-[#333]">
                註：
                <br />
                將“<b>滑鼠游標</b>“指向該畢業學校任一直條
                <br />
                圖即可觀看該校每年錄取學生人數。
              </div>

              <div className="absolute left-[61px] top-[696px] flex h-[43px] w-[129px] items-center border border-[#3a6b3a] bg-white pl-[7px] shadow-[7px_7px_9px_rgba(0,0,0,0.35)]">
                <svg width={33} height={33} viewBox="0 0 32 32" fill="none" stroke="#666" strokeWidth={3}>
                  <path d="M10 3L3 10l7 7M3 10h17c10 0 10 17-2 17h-6" />
                </svg>
                <span className="ml-[10px] whitespace-nowrap text-[18.500px] text-[#808080]">回到目錄</span>
              </div>

              <div className="absolute left-[426px] top-[37px]">
                <Chart
                  title="五專"
                  rows={wuzhuan}
                  unit={15.6}
                  ticks={[0, 5, 10, 15, 20]}
                  thumb={26}
                  selected
                />
              </div>
              <div className="absolute left-[870px] top-[37px]">
                <Chart
                  title="四技"
                  rows={siji}
                  unit={10.28}
                  ticks={[0, 5, 10, 15, 20, 25, 30, 35]}
                  thumb={18}
                />
              </div>
            </div>

            {/* filters pane, collapsed */}
            <div className="flex w-[34px] shrink-0 flex-col items-center bg-white pt-[14px]">
              <svg width={8} height={16} viewBox="0 0 8 16" fill="none" stroke="#605e5c">
                <path d="M7 1L1 8l6 7" />
              </svg>
              <svg width={14} height={14} viewBox="0 0 14 14" fill="none" stroke="#605e5c" className="mt-[34px]">
                <path d="M.5 7L12 1.500v11z" fill="#fff" />
                <path d="M12.500 2v10" stroke="#e8a33a" />
              </svg>
              <div className="mt-[14px] text-[14px] font-medium leading-[15px] text-[#333] [text-orientation:sideways] [writing-mode:vertical-rl]">
                篩選
              </div>
            </div>
          </div>

          {/* page tabs */}
          <div className="flex h-[35px] shrink-0 bg-[#f3f2f1]">
            <div className="flex w-[39px] shrink-0 items-center justify-center gap-[14px] border-x border-[#c8c6c4]">
              <svg width={6} height={9} viewBox="0 0 6 9">
                <path d="M5 0v9L0 4.500z" fill="#333" />
              </svg>
              <svg width={6} height={9} viewBox="0 0 6 9">
                <path d="M1 0v9l5-4.500z" fill="#333" />
              </svg>
            </div>
            <div className="flex min-w-0 flex-1 overflow-hidden">
              <PageTab label="十六年內流失畢校" w="w-[137px]" active />
              <PageTab label="十六年內流失優良畢校-01" w="w-[179px]" />
              <PageTab label="十六年內流失優良畢校-02" w="w-[180px]" />
              <PageTab label="六年內流失優良畢校-01" w="w-[166px]" />
              <PageTab label="六年內流失優良畢校-02" w="w-[166px]" />
              <PageTab label="高級中學飽和情形" w="w-[137px]" />
              <PageTab label="大專院校飽和情形" w="w-[137px]" />
              <div className="flex min-w-0 flex-1 items-center overflow-hidden whitespace-nowrap pl-[13px] text-[12px] text-[#3b3a39]">
                <svg width={13} height={13} viewBox="0 0 13 13" fill="none" stroke="#666" className="mr-[4px] mt-[4px] shrink-0">
                  <path d="M1 6c2-3 7-4 10 0-2 3-7 4-10 0zM3 2l8 10" />
                  <circle cx={6} cy={6} r={2} />
                </svg>
                附錄：五專生 畢業學校各入學學年學生人數
              </div>
            </div>
            <div className="mt-[2px] flex h-[32px] w-[39px] shrink-0 items-center justify-center bg-[#f2c811]">
              <svg width={12} height={12} viewBox="0 0 12 12">
                <path d="M6 0v12M0 6h12" stroke="#808080" strokeWidth={3} />
              </svg>
            </div>
          </div>
        </div>

        <VisualsPanel />

        {/* fields pane, collapsed */}
        <div className="flex w-[33px] shrink-0 flex-col items-center bg-[#f3f2f1] pt-[14px]">
          <svg width={8} height={16} viewBox="0 0 8 16" fill="none" stroke="#605e5c">
            <path d="M7 1L1 8l6 7" />
          </svg>
          <div className="mt-[33px] text-[14px] font-medium leading-[15px] text-[#333] [text-orientation:sideways] [writing-mode:vertical-rl]">
            欄位
          </div>
        </div>
      </div>

      {/* status bar */}
      <div className="flex h-[24px] shrink-0 items-center border-t border-[#dcdcdc] bg-[#f3f2f1] pl-[5px] text-[12px] text-[#605e5c]">
        頁面 26 之 10
      </div>

      {/* taskbar */}
      <div className="flex h-[40px] shrink-0 items-center bg-[#2f3429] text-white">
        <div className="flex w-[48px] shrink-0 justify-center">
          <svg width={17} height={17} viewBox="0 0 17 17" fill="#fff">
            <path d="M0 2.500l7.500-1v6.500H0zM8.500 1.300L17 0v8H8.500zM0 9h7.500v6.500L0 14.500zM8.500 9H17v8l-8.500-1.200z" />
          </svg>
        </div>
        <div className="flex w-[48px] shrink-0 justify-center">
          <svg width={18} height={20} viewBox="0 0 18 20" fill="none" stroke="#fff" strokeWidth={1.300}>
            <circle cx={11} cy={7} r={6} />
            <path d="M7 12l-6 7" />
          </svg>
        </div>
        <div className="flex h-full items-stretch pl-[3px]">
          <TaskIcon bar="bg-[#76b9ed]">
            <svg width={26} height={26} viewBox="0 0 26 26">
              <circle cx={13} cy={13} r={12.500} fill="#1b8fd6" />
              <path d="M25 12c0-7-6-12-12-12C6 0 2 5 1 9c3-4 12-5 14 1 0 2-3 2-3 2s0 4 6 4c4 0 7-2 7-4z" fill="#5fd08a" />
              <path d="M11 14c-2 5 2 11 8 10-8 4-18-3-18-12 2 1 7-1 10 2z" fill="#0d5fa8" />
            </svg>
          </TaskIcon>
          <TaskIcon bar="bg-[#76b9ed]">
            <svg width={28} height={30} viewBox="0 0 28 30">
              <circle cx={12} cy={12} r={12} fill="#e54335" />
              <path d="M12 12L1.500 18A12 12 0 0 0 14 24z" fill="#34a853" />
              <path d="M12 12h11.500A12 12 0 0 1 14 24z" fill="#fbbc05" />
              <circle cx={12} cy={12} r={5.500} fill="#4285f4" stroke="#fff" strokeWidth={1.500} />
              <circle cx={18} cy={19} r={9} fill="#7c5bbd" />
              <text x={18} y={22} fontSize={8} fill="#fff" textAnchor="middle">
                雅涵
              </text>
            </svg>
          </TaskIcon>
          <TaskIcon bar="bg-[#76b9ed]">
            <svg width={22} height={24} viewBox="0 0 22 24">
              <path d="M1 2h8l2 2h10v18H1z" fill="#e9b94a" />
              <path d="M3 6h18v16H3z" fill="#f6d77d" />
              <path d="M7 22v-8h8v8h-2.500v-4h-3v4z" fill="#2f7fd0" />
            </svg>
          </TaskIcon>
          <TaskIcon bar="bg-[#f7630c]" bg="bg-[#a8662a]">
            <svg width={24} height={26} viewBox="0 0 24 26">
              <rect width={24} height={26} rx={5} fill="#00b900" />
              <ellipse cx={12} cy={12} rx={10} ry={8.500} fill="#fff" />
              <path d="M8 19l3 4 3-4z" fill="#fff" />
              <text x={12} y={15} fontSize={7} fontWeight={700} fill="#00b900" textAnchor="middle">
                LINE
              </text>
            </svg>
          </TaskIcon>
          <TaskIcon bar="bg-[#76b9ed]">
            <svg width={24} height={24} viewBox="0 0 24 24">
              <circle cx={12} cy={12} r={12} fill="#7aaddc" />
              <text x={12} y={17} fontSize={15} fontFamily="Liberation Serif, serif" fill="#fff" textAnchor="middle">
                R
              </text>
            </svg>
          </TaskIcon>
          <TaskIcon bar="bg-[#76b9ed]" bg="bg-[#575c50]">
            <svg width={20} height={24} viewBox="0 0 20 24">
              <rect x={0} y={14} width={6} height={10} fill="#f2c811" />
              <rect x={5} y={7} width={7} height={17} fill="#f7dd6a" />
              <rect x={11} y={0} width={8} height={24} fill="#e8a90a" />
            </svg>
          </TaskIcon>
          <TaskIcon bar="bg-[#76b9ed]">
            <svg width={26} height={26} viewBox="0 0 26 26">
              <path d="M1 15C1 8 9 4 15 6c6 2 6 7 2 9-3 1-2 4-4 6-4 3-12-1-12-6z" fill="#dfeaf0" />
              <circle cx={7} cy={12} r={1.800} fill="#2a86d0" />
              <circle cx={6} cy={17} r={1.800} fill="#3c9a5f" />
              <circle cx={11} cy={9} r={1.800} fill="#e54335" />
              <circle cx={15} cy={11} r={1.800} fill="#333" />
              <path d="M23 1l2 1-8 16-3 5 .5-6z" fill="#c9701a" />
            </svg>
          </TaskIcon>
          <TaskIcon bar="bg-[#76b9ed]">
            <svg width={22} height={28} viewBox="0 0 22 28">
              <rect width={22} height={28} fill="#2ea3dd" />
              <path d="M0 28V18l7-9 6 7 3-3 6 7v8z" fill="#17397a" />
              <circle cx={16} cy={7} r={2.500} fill="#d6f0fb" />
            </svg>
          </TaskIcon>
        </div>
        <div className="ml-auto flex h-full items-center">
          <svg width={14} height={9} viewBox="0 0 14 9" fill="none" stroke="#fff" strokeWidth={1.200}>
            <path d="M1 8l6-6.500L13 8" />
          </svg>
          <svg width={18} height={12} viewBox="0 0 18 12" fill="#e8e8e8" className="ml-[8px]">
            <path d="M3 12a3 3 0 0 1-1-6c1-3 5-5 8-3 3 0 4 2 4 3 4 0 4 6 0 6z" />
          </svg>
          <svg width={18} height={18} viewBox="0 0 18 18" fill="none" stroke="#fff" className="ml-[7px]">
            <path d="M4.500 2.500H17V12H7M1 1.500h3.500V17H1zM10 12v3.500M7 15.500h7" />
          </svg>
          <svg width={16} height={14} viewBox="0 0 16 14" fill="none" stroke="#fff" className="ml-[7px]">
            <path d="M1 5h3l4-4v12L4 9H1zM10.500 4.500a4 4 0 0 1 0 5" />
            <path d="M12.500 2.500a7 7 0 0 1 0 9" stroke="#888" />
          </svg>
          <span className="ml-[8px] text-[14px]">中</span>
          <div className="ml-[11px] flex w-[66px] flex-col text-[12px] leading-[17.500px] text-[#eee]">
            <span className="whitespace-nowrap">上午 09:45</span>
            <span>2022/1/20</span>
          </div>
          <div className="relative ml-[17px] h-[24px] w-[24px]">
            <svg width={16} height={14} viewBox="0 0 16 14" className="absolute left-[0px] top-[1px]">
              <path d="M0 0h16v11H9l-2 3v-3H0z" fill="#fff" />
              <path d="M3 3h10M3 6h10M3 9h7" stroke="#333" />
            </svg>
            <div className="absolute left-[7px] top-[7px] flex h-[17px] w-[17px] items-center justify-center rounded-full border border-[#999] bg-[#2f3429] text-[12px] leading-none text-white">
              7
            </div>
          </div>
          <div className="ml-[6px] h-full w-[5px] border-l border-[#555]" />
        </div>
      </div>

      {/* tutorial annotations */}
      <svg
        width={1680}
        height={1050}
        viewBox="0 0 1680 1050"
        fill="none"
        className="pointer-events-none absolute left-0 top-0 font-['Noto_Sans','Noto_Sans_CJK_TC',sans-serif]"
      >
        <g stroke={RED} strokeWidth={5}>
          <ellipse cx={1539} cy={400} rx={27} ry={28} />
          <ellipse cx={1590} cy={545.500} rx={40} ry={17} />
          <ellipse cx={1510} cy={654} rx={36} ry={32} />
        </g>
        <g stroke={RED}>
          <path d="M650 368A72.500 46 0 1 1 680 377L653.300 391Z" />
          <path d="M1477 711.700A85 50 0 1 1 1445 702.500L1474 686.700Z" />
        </g>
        <g fill="#f5222d" dominantBaseline="central">
          <text x={643} y={310} fontSize={21.500}>Step.5-1</text>
          <text x={643} y={345} fontSize={20}>點選主圖表.</text>
          <text x={1552} y={367} fontSize={21.500}>Step.5-2</text>
          <text x={1570} y={576} fontSize={21.500}>Step.5-3</text>
          <text x={1368} y={724} fontSize={21}>Step.5-4</text>
          <text x={1369} y={754} fontSize={15.700}>選擇剛剛做好的細</text>
          <text x={1369} y={779} fontSize={15.700}>節圖表頁面名稱.</text>
        </g>
      </svg>
    </div>
  );
}
